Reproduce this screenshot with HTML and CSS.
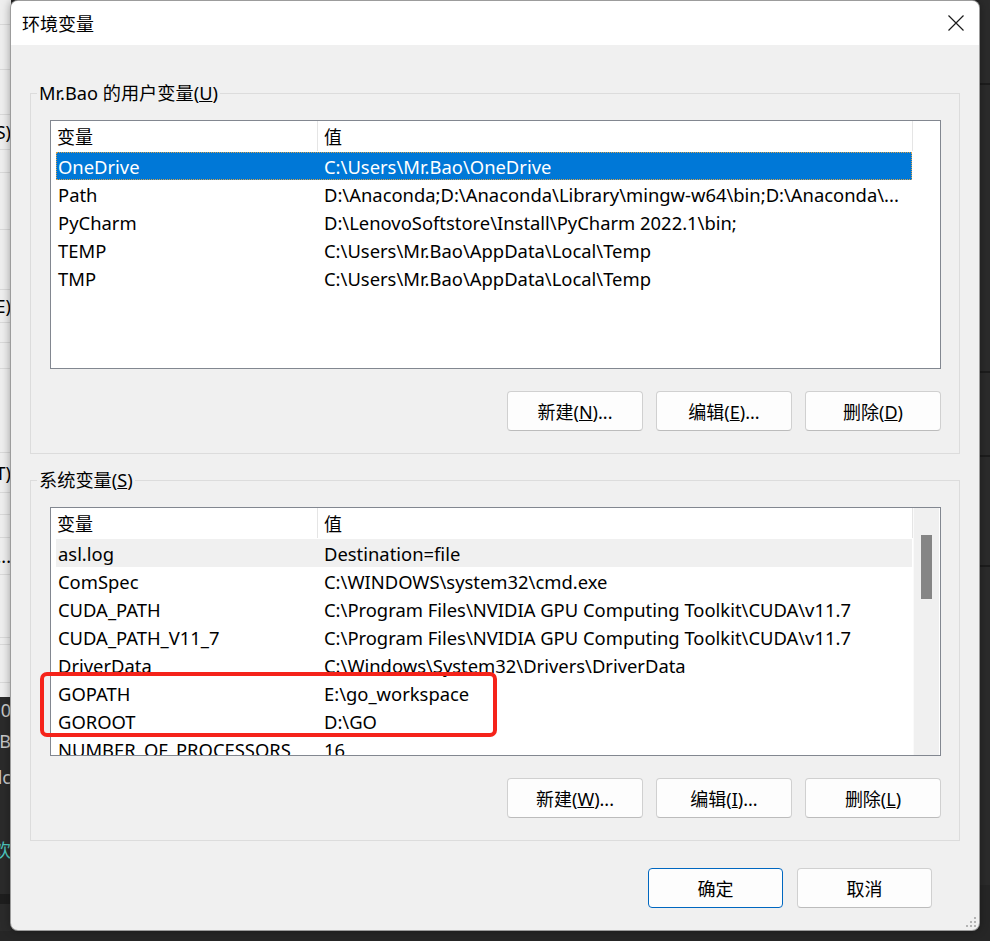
FILE: index.html
```html
<!DOCTYPE html>
<html lang="zh-CN">
<head>
  <meta charset="UTF-8" />
  <title>环境变量</title>
  <link rel="stylesheet" href="styles.css">
</head>
<body>
  <!-- windows behind the dialog -->
  <div class="bg-left">
    <div class="bg-light">
      <div class="seg" style="height:25px"></div>
      <div class="seg" style="height:45px"></div>
      <div class="seg" style="height:45px"></div>
      <div class="seg" style="height:35px">(S)</div>
      <div class="seg" style="height:23px"></div>
      <div class="seg" style="height:57px"></div>
      <div class="seg" style="height:60px"></div>
      <div class="seg" style="height:33px">(E)</div>
      <div class="seg" style="height:20px"></div>
      <div class="seg" style="height:26px"></div>
      <div class="seg" style="height:84px"></div>
      <div class="seg" style="height:40px">(T)</div>
      <div class="seg" style="height:22px"></div>
      <div class="seg" style="height:23px"></div>
      <div class="seg" style="height:37px">...0...</div>
      <div class="seg" style="height:63px"></div>
      <div class="seg" style="height:7px"></div>
      <div class="seg" style="height:38px"></div>
      <div class="seg last" style="height:14px"></div>
    </div>
    <div class="bg-dark">
      <div class="dline first">10</div>
      <div class="dline">AB</div>
      <div class="dline">lc</div>
      <div class="dline"></div>
      <div class="dline teal">欢</div>
      <div class="dband"></div>
    </div>
  </div>
  <div class="bg-right">
    <div class="rseg" style="height:85px"></div>
    <div class="rseg" style="height:288px"></div>
    <div class="rseg" style="height:84px"></div>
    <div class="rseg" style="height:110px"></div>
    <div class="rseg light" style="height:318px"></div>
  </div>

  <div class="dialog">
    <div class="titlebar">
      <span class="title">环境变量</span>
      <svg class="close" width="16" height="16" viewBox="0 0 16 16">
        <path d="M0.5 0.5 L15.5 15.5 M15.5 0.5 L0.5 15.5" stroke="#1a1a1a" stroke-width="1.2" fill="none"/>
      </svg>
    </div>

    <div class="content">
      <div class="group">
        <span class="legend">Mr.Bao 的用户变量(<u>U</u>)</span>
        <div class="list">
          <div class="list-main">
            <div class="list-head">
              <div class="hcell c1">变量</div>
              <div class="hcell c2">值</div>
            </div>
            <div class="rows">
              <div class="row selected"><span class="c1">OneDrive</span><span class="c2">C:\Users\Mr.Bao\OneDrive</span></div>
              <div class="row"><span class="c1">Path</span><span class="c2">D:\Anaconda;D:\Anaconda\Library\mingw-w64\bin;D:\Anaconda\...</span></div>
              <div class="row"><span class="c1">PyCharm</span><span class="c2">D:\LenovoSoftstore\Install\PyCharm 2022.1\bin;</span></div>
              <div class="row"><span class="c1">TEMP</span><span class="c2">C:\Users\Mr.Bao\AppData\Local\Temp</span></div>
              <div class="row"><span class="c1">TMP</span><span class="c2">C:\Users\Mr.Bao\AppData\Local\Temp</span></div>
            </div>
          </div>
        </div>
        <div class="btns">
          <button class="btn">新建(<u>N</u>)...</button>
          <button class="btn">编辑(<u>E</u>)...</button>
          <button class="btn">删除(<u>D</u>)</button>
        </div>
      </div>

      <div class="group second">
        <span class="legend">系统变量(<u>S</u>)</span>
        <div class="list">
          <div class="list-main">
            <div class="list-head">
              <div class="hcell c1">变量</div>
              <div class="hcell c2">值</div>
            </div>
            <div class="rows">
              <div class="row inactive"><span class="c1">asl.log</span><span class="c2">Destination=file</span></div>
              <div class="row"><span class="c1">ComSpec</span><span class="c2">C:\WINDOWS\system32\cmd.exe</span></div>
              <div class="row"><span class="c1">CUDA_PATH</span><span class="c2">C:\Program Files\NVIDIA GPU Computing Toolkit\CUDA\v11.7</span></div>
              <div class="row"><span class="c1">CUDA_PATH_V11_7</span><span class="c2">C:\Program Files\NVIDIA GPU Computing Toolkit\CUDA\v11.7</span></div>
              <div class="row"><span class="c1">DriverData</span><span class="c2">C:\Windows\System32\Drivers\DriverData</span></div>
              <div class="row"><span class="c1">GOPATH</span><span class="c2">E:\go_workspace</span></div>
              <div class="row"><span class="c1">GOROOT</span><span class="c2">D:\GO</span></div>
              <div class="row"><span class="c1">NUMBER_OF_PROCESSORS</span><span class="c2">16</span></div>
            </div>
          </div>
          <div class="vscroll"><div class="thumb"></div></div>
        </div>
        <div class="btns">
          <button class="btn">新建(<u>W</u>)...</button>
          <button class="btn">编辑(<u>I</u>)...</button>
          <button class="btn">删除(<u>L</u>)</button>
        </div>
      </div>

      <div class="footer">
        <button class="btn wide primary">确定</button>
        <button class="btn wide">取消</button>
      </div>
    </div>

    <!-- annotation drawn over the list -->
    <div class="highlight"></div>

    <svg class="grip" width="12" height="12" viewBox="0 0 12 12">
      <rect x="9" y="1" width="2" height="2" fill="#b4b4b4"/>
      <rect x="5" y="5" width="2" height="2" fill="#b4b4b4"/>
      <rect x="9" y="5" width="2" height="2" fill="#b4b4b4"/>
      <rect x="1" y="9" width="2" height="2" fill="#b4b4b4"/>
      <rect x="5" y="9" width="2" height="2" fill="#b4b4b4"/>
      <rect x="9" y="9" width="2" height="2" fill="#b4b4b4"/>
    </svg>
  </div>
</body>
</html>
```

FILE: styles.css
```css
* {
  box-sizing: border-box;
}

body {
  margin: 0;
  width: 990px;
  height: 941px;
  overflow: hidden;
  position: relative;
  background-color: #262626;
  font-family: "Noto Sans", "Noto Sans CJK SC", sans-serif;
  font-size: 18px;
  color: #000;
}

/* background windows */

.bg-left {
  position: absolute;
  left: 0;
  top: 0;
  width: 11px;
  height: 941px;
}

.bg-light {
  background-color: #eeeeee;
  height: 697px;
}

.seg {
  display: flex;
  justify-content: flex-end;
  align-items: center;
  overflow: hidden;
  white-space: nowrap;
  border-bottom: 1px solid #d9d9d9;
}

.seg.last {
  border-bottom: none;
}

.bg-dark {
  background-color: #2b2b2b;
  color: #c8c8c8;
  height: 234px;
}

.dline {
  height: 36px;
  display: flex;
  justify-content: flex-end;
  align-items: center;
  overflow: hidden;
  white-space: nowrap;
}

.dline.first {
  height: 26px;
}

.dline.teal {
  color: #4ec9c0;
}

.dband {
  margin-top: 27px;
  height: 10px;
  background-color: #1e1e1e;
}

.bg-right {
  position: absolute;
  left: 979px;
  top: 0;
  width: 11px;
  height: 941px;
}

.rseg {
  background-color: #2b2b2b;
  border-bottom: 2px solid #1c1c1c;
}

.rseg.light {
  border-bottom: none;
}

/* dialog */

.dialog {
  position: absolute;
  left: 10px;
  top: 0;
  width: 970px;
  height: 931px;
  background-color: #f0f0f0;
  border: 1px solid rgba(0, 0, 0, 0.35);
  border-radius: 8px;
  box-shadow: 0 0 8px rgba(0, 0, 0, 0.35);
  overflow: hidden;
}

.titlebar {
  height: 44px;
  background-color: #fff;
  display: flex;
  align-items: center;
  padding-left: 11px;
  padding-right: 15px;
}

.title {
  font-size: 18px;
}

.close {
  margin-left: auto;
}

.content {
  padding: 48px 19px 0 19px;
}

.group {
  position: relative;
  border: 1px solid #dcdcdc;
  padding: 26px 18px 22px 19px;
}

.group.second {
  margin-top: 26px;
}

.legend {
  position: absolute;
  top: -13px;
  left: 6px;
  padding: 0 2px;
  line-height: 24px;
  background-color: #f0f0f0;
  white-space: nowrap;
  font-size: 18.2px;
}

.list {
  display: flex;
  height: 249px;
  border: 1px solid #828790;
  background-color: #fff;
  overflow: hidden;
}

.list-main {
  width: 862px;
  flex-shrink: 0;
}

.list-head {
  display: flex;
  height: 30px;
}

.hcell {
  display: flex;
  align-items: center;
  padding-left: 6px;
  border-right: 1px solid #e5e5e5;
}

.hcell.c1 {
  width: 267px;
}

.hcell.c2 {
  width: 595px;
}

.rows {
  margin: 1px 0 0 5px;
  width: 856px;
}

.row {
  display: flex;
  align-items: center;
  height: 28px;
  white-space: nowrap;
  font-size: 18.4px;
}

.row .c1 {
  width: 268px;
  padding-left: 2px;
  flex-shrink: 0;
}

.row .c2 {
  overflow: hidden;
}

.row.selected {
  background-color: #0078d7;
  color: #fff;
  outline: 1px dotted #d9a24a;
  outline-offset: -1px;
}

.row.inactive {
  background-color: #f0f0f0;
}

.vscroll {
  width: 26px;
  flex-shrink: 0;
  background-color: #f0f0f0;
  border-left: 1px solid #fafafa;
  padding: 27px 0 0 7px;
}

.thumb {
  width: 11px;
  height: 64px;
  background-color: #858585;
}

.btns {
  display: flex;
  justify-content: flex-end;
  gap: 13px;
  margin-top: 22px;
}

.btn {
  width: 136px;
  height: 40px;
  padding: 0;
  font-family: inherit;
  font-size: 18px;
  color: #000;
  background-color: #fdfdfd;
  border: 1px solid #d0d0d0;
  border-bottom-color: #bcbcbc;
  border-radius: 4px;
}

.btn.wide {
  width: 135px;
}

.btn.primary {
  border-color: #0067c0;
}

.footer {
  display: flex;
  justify-content: flex-end;
  gap: 14px;
  margin-top: 27px;
  padding-right: 28px;
}

.highlight {
  position: absolute;
  left: 29px;
  top: 671px;
  width: 457px;
  height: 65px;
  border: 4px solid #f5231a;
  border-radius: 7px;
}

.grip {
  position: absolute;
  right: 2px;
  bottom: 2px;
}
```
